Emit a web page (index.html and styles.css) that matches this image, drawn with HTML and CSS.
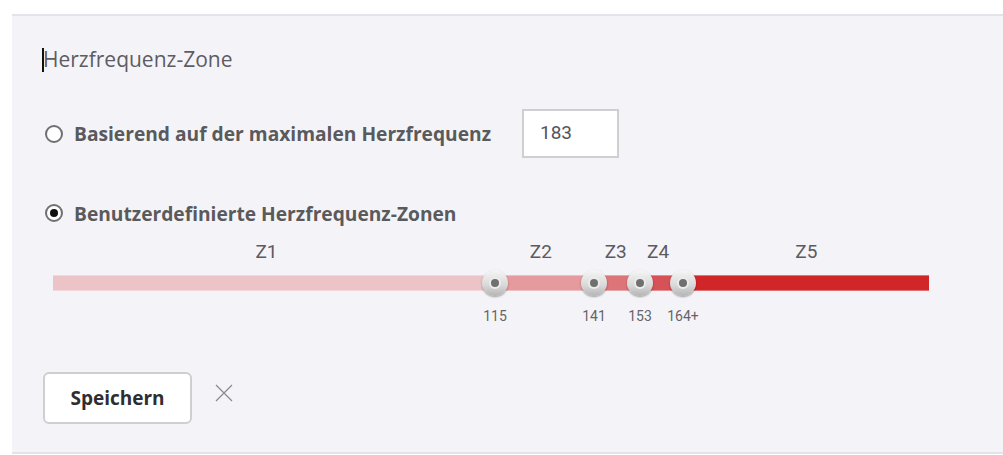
FILE: index.html
```html
<!DOCTYPE html>
<html lang="de">
<head>
    <meta charset="UTF-8">
    <meta name="viewport" content="width=device-width, initial-scale=1.0">
    <title>Herzfrequenz-Zone</title>
    <link rel="stylesheet" href="styles.css">
</head>
<body>
    <div class="panel">
        <div class="title"><span class="caret"></span>Herzfrequenz-Zone</div>

        <label class="option option-max">
            <span class="radio"></span>
            <span class="option-text">Basierend auf der maximalen Herzfrequenz</span>
            <span class="max-input">183</span>
        </label>

        <label class="option option-custom">
            <span class="radio checked"></span>
            <span class="option-text">Benutzerdefinierte Herzfrequenz-Zonen</span>
        </label>

        <div class="zones">
            <div class="zone-labels">
                <span class="z1">Z1</span>
                <span class="z2">Z2</span>
                <span class="z3">Z3</span>
                <span class="z4">Z4</span>
                <span class="z5">Z5</span>
            </div>
            <div class="track-wrap">
                <div class="track">
                    <span class="seg z1"></span>
                    <span class="seg z2"></span>
                    <span class="seg z3"></span>
                    <span class="seg z4"></span>
                    <span class="seg z5"></span>
                </div>
                <span class="handle" style="left: 442px"></span>
                <span class="handle" style="left: 541px"></span>
                <span class="handle" style="left: 587px"></span>
                <span class="handle" style="left: 630px"></span>
            </div>
            <div class="values">
                <span class="value" style="left: 442px">115</span>
                <span class="value" style="left: 541px">141</span>
                <span class="value" style="left: 587px">153</span>
                <span class="value" style="left: 630px">164+</span>
            </div>
        </div>

        <div class="actions">
            <button class="save">Speichern</button>
            <svg class="close" width="18" height="18" viewBox="0 0 18 18">
                <path d="M1 1 L17 17 M17 1 L1 17" stroke="#8a8a8e" stroke-width="1.2" fill="none"/>
            </svg>
        </div>
    </div>
</body>
</html>
```

FILE: styles.css
```css
body {
    margin: 0;
    background: #fff;
    font-family: "Open Sans", "Liberation Sans", sans-serif;
    color: #5c5a60;
}

.panel {
    margin: 14px 0 0 12px;
    height: 440px;
    box-sizing: border-box;
    background: #f4f4f8;
    border-top: 2px solid #e4e3ea;
    border-bottom: 2px solid #e4e3ea;
    padding: 32px 0 0 31px;
}

.title {
    position: relative;
    height: 24px;
    line-height: 22px;
    font-size: 21px;
    color: #5e5b63;
}

.caret {
    position: absolute;
    left: -1px;
    top: 0;
    width: 2px;
    height: 24px;
    background: #111;
}

.option {
    display: flex;
    align-items: center;
    font-size: 19.2px;
    font-weight: bold;
    color: #5a5a5c;
}

.option-max {
    height: 49px;
    margin-top: 37px;
}

.option-custom {
    height: 24px;
    margin-top: 43px;
}

.radio {
    width: 14px;
    height: 14px;
    border: 2px solid #707070;
    border-radius: 50%;
    background: #fff;
    margin-right: 11px;
    margin-left: 2px;
    display: flex;
    align-items: center;
    justify-content: center;
}

.radio.checked::after {
    content: "";
    width: 8px;
    height: 8px;
    border-radius: 50%;
    background: #111;
}

.max-input {
    margin-left: 31px;
    width: 97px;
    height: 49px;
    box-sizing: border-box;
    border: 2px solid #cfcfd2;
    background: #fff;
    font-family: Roboto, "Liberation Sans", sans-serif;
    font-weight: normal;
    font-size: 19px;
    color: #55545a;
    line-height: 43px;
    padding-left: 16px;
}

.zones {
    margin-left: 10px;
    width: 876px;
    font-family: Roboto, "Liberation Sans", sans-serif;
}

.zone-labels {
    display: flex;
    margin-top: 15px;
    height: 24px;
    line-height: 24px;
    font-size: 19px;
    color: #5c5a60;
}

.zone-labels span {
    text-align: center;
}

.zone-labels .z1 { width: 428px; }
.zone-labels .z2 { width: 106px; margin-left: 8px; }
.zone-labels .z3 { width: 44px; }
.zone-labels .z4 { width: 41px; }
.zone-labels .z5 { width: 246px; margin-left: 5px; }

.track-wrap {
    position: relative;
    height: 26px;
    margin-top: 6px;
}

.track {
    display: flex;
    padding-top: 5px;
}

.seg {
    border-top: 1px solid rgba(255, 255, 255, 0.35);
    border-bottom: 1px solid rgba(255, 255, 255, 0.35);
    box-sizing: border-box;
    height: 16px;
}

.seg.z1 { width: 442px; background: #ecc3c7; }
.seg.z2 { width: 99px; background: #e59a9d; }
.seg.z3 { width: 46px; background: #dd7478; }
.seg.z4 { width: 43px; background: #d65257; }
.seg.z5 { width: 246px; background: #d0262a; }

.handle {
    position: absolute;
    top: 0;
    width: 26px;
    height: 26px;
    margin-left: -13px;
    border-radius: 50%;
    box-sizing: border-box;
    background: linear-gradient(#f6f6f6, #d8d8d8 60%, #b4b4b4);
    box-shadow: 0 1px 2px rgba(0, 0, 0, 0.35);
    display: flex;
    align-items: center;
    justify-content: center;
}

.handle::after {
    content: "";
    width: 8px;
    height: 8px;
    border-radius: 50%;
    background: #707070;
    box-shadow: 0 0 0 2px #ececec;
}

.values {
    position: relative;
    height: 16px;
    margin-top: 12px;
}

.value {
    position: absolute;
    top: 0;
    width: 50px;
    margin-left: -25px;
    text-align: center;
    font-size: 14px;
    line-height: 16px;
    color: #66646a;
}

.actions {
    display: flex;
    align-items: center;
    margin-top: 48px;
}

.save {
    width: 149px;
    height: 52px;
    border: 2px solid #cfcfd2;
    border-radius: 6px;
    background: #fff;
    font-family: "Open Sans", "Liberation Sans", sans-serif;
    font-weight: bold;
    font-size: 19px;
    color: #2e2d31;
    cursor: pointer;
}

.close {
    margin-left: 23px;
    margin-top: -10px;
}
```
